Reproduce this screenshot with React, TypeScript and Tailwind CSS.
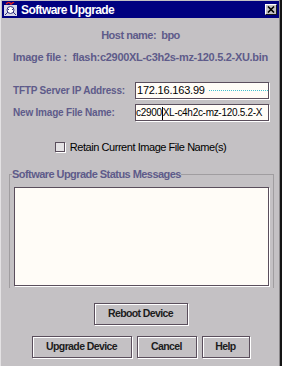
import React from "react";

const font = { fontFamily: '"Liberation Sans", Arial, sans-serif' };

function Btn({ w, children }: { w: string; children: React.ReactNode }) {
  return (
    <div
      className={`${w} h-[22px] flex items-center justify-center border border-[#5a4e5c] shadow-[1px_1px_0_#ffffff,inset_1px_1px_0_#ffffff] text-[10.5px] font-bold text-[#1c1c1c] tracking-[-0.6px]`}
    >
      {children}
    </div>
  );
}

export default function App() {
  return (
    <div className="w-[285px] h-[369px] bg-white" style={font}>
      <div className="w-[282px] h-[366px] bg-[#c4c1c4] border-l border-l-[#e4e2e4] border-r-2 border-r-[#141414] shadow-[inset_-1px_0_0_#8a878a] flex flex-col">
        {/* Title bar */}
        <div className="mt-[1px] ml-[1px] mr-[1px] h-[17px] bg-[#000080] flex items-center">
          <svg width="15" height="15" viewBox="0 0 15 15" className="ml-[1px]">
            <rect x="0" y="0" width="15" height="15" fill="#000080" />
            <rect x="1" y="3" width="13" height="11" fill="#d8d8e8" />
            <path d="M3 2 L6 0 L8 2 L11 0" stroke="#e02020" strokeWidth="1.5" fill="none" />
            <circle cx="7.5" cy="8" r="3.5" fill="#ffffff" stroke="#303080" strokeWidth="1" />
            <rect x="5" y="7" width="1" height="1" fill="#303080" />
            <rect x="9" y="7" width="1" height="1" fill="#303080" />
            <path d="M2 13 L5 10 M13 13 L10 10" stroke="#303080" strokeWidth="1" />
          </svg>
          <span className="ml-[3px] text-white text-[12px] font-bold tracking-[-0.6px] leading-none">
            Software Upgrade
          </span>
          <div className="ml-auto mr-[2px] w-[12px] h-[11px] bg-[#c4c1c4] border border-t-white border-l-white border-r-[#1a1a1a] border-b-[#1a1a1a] flex items-center justify-center">
            <svg width="8" height="7" viewBox="0 0 8 7">
              <path d="M1 0.5 L7 6.5 M7 0.5 L1 6.5" stroke="#000" strokeWidth="1.6" />
            </svg>
          </div>
        </div>

        {/* Host / image lines */}
        <div className="mt-[10px] h-[14px] leading-[14px] text-center text-[11px] font-bold text-[#5e5b8a] tracking-[-0.5px] whitespace-pre">
          {"Host name:  bpo"}
        </div>
        <div className="mt-[8px] h-[14px] leading-[14px] text-center text-[11px] font-bold text-[#5e5b8a] tracking-[-0.3px] whitespace-pre">
          {"Image file :  flash:c2900XL-c3h2s-mz-120.5.2-XU.bin"}
        </div>

        {/* TFTP row */}
        <div className="mt-[18px] h-[17px] flex items-center pl-[12px]">
          <div className="w-[122px] text-[10px] font-bold text-[#5e5b8a] tracking-[-0.2px]">
            TFTP Server IP Address:
          </div>
          <div className="w-[134px] h-[17px] border border-[#5a4e5c] bg-[#fffcf7] shadow-[1px_1px_0_#ffffff] flex items-center pl-[1px] overflow-hidden">
            <span className="text-[11px] text-black tracking-[-0.2px] whitespace-nowrap">172.16.163.99</span>
            <span className="ml-[4px] flex-1 border-t border-dotted border-[#40c0d0] h-0" />
          </div>
        </div>
        <div className="mt-[5px] h-[17px] flex items-center pl-[12px]">
          <div className="w-[122px] text-[10px] font-bold text-[#5e5b8a] tracking-[-0.2px]">
            New Image File Name:
          </div>
          <div className="w-[134px] h-[17px] border border-[#5a4e5c] bg-[#fffcf7] shadow-[1px_1px_0_#ffffff] flex items-center overflow-hidden">
            <span className="text-[10px] text-black tracking-[-0.3px] whitespace-nowrap">
              c2900
              <span className="inline-block w-[1px] h-[13px] bg-black align-middle" />
              XL-c4h2c-mz-120.5.2-X
            </span>
          </div>
        </div>

        {/* Checkbox */}
        <div className="mt-[19px] h-[14px] flex items-center justify-center">
          <div className="w-[10px] h-[10px] border border-[#5a4e5c] bg-[#e4e2e4] shadow-[1px_1px_0_#ffffff]" />
          <span className="ml-[5px] text-[11px] text-black tracking-[-0.45px]">
            Retain Current Image File Name(s)
          </span>
        </div>

        {/* Group box */}
        <div className="relative mt-[20px] ml-[8px] w-[265px] border-t border-l border-r border-[#a09da0] pl-[4px] pt-[12px] pb-[2px]">
          <span className="absolute left-[2px] top-[-7px] h-[12px] leading-[12px] bg-[#c4c1c4] text-[11px] font-bold text-[#5e5b8a] tracking-[-0.55px] whitespace-nowrap">
            Software Upgrade Status Messages
          </span>
          <div className="w-[255px] h-[99px] border border-[#5a4e5c] bg-[#fffcf7] shadow-[1px_1px_0_#ffffff]" />
        </div>

        {/* Reboot */}
        <div className="mt-[15px] flex justify-center">
          <Btn w="w-[94px]">Reboot Device</Btn>
        </div>

        {/* Bottom buttons */}
        <div className="mt-[11px] flex justify-center gap-[5px]">
          <Btn w="w-[100px]">Upgrade Device</Btn>
          <Btn w="w-[60px]">Cancel</Btn>
          <Btn w="w-[48px]">Help</Btn>
        </div>
      </div>
    </div>
  );
}
